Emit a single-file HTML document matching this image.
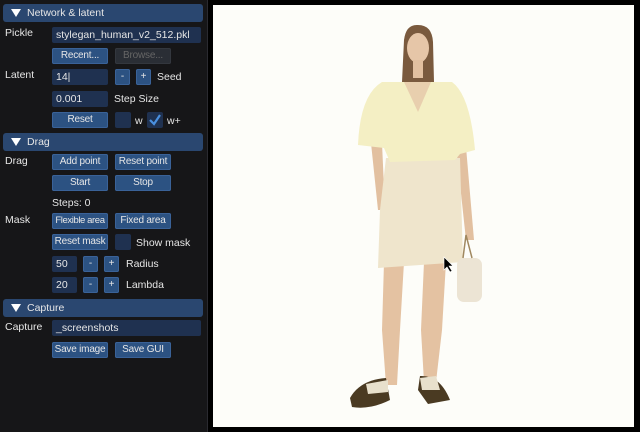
<!DOCTYPE html>
<html><head><meta charset="utf-8"><style>
*{margin:0;padding:0;box-sizing:border-box}
body{width:640px;height:432px;background:#000;position:relative;overflow:hidden;font-family:"Liberation Sans","DejaVu Sans",sans-serif;font-size:10.5px;color:#e6e6e6}
#panel{position:absolute;left:0;top:0;width:208px;height:432px;background:#161618;border-right:1px solid #2a2a30}
.a{position:absolute;white-space:nowrap}
.hd{position:absolute;left:3px;width:200px;height:18px;background:#2a4770;border-radius:3px;padding-left:24px;line-height:18px}
.hd:before{content:"";position:absolute;left:8px;top:5px;border-left:5px solid transparent;border-right:5px solid transparent;border-top:8px solid #fff}
.b{position:absolute;height:16px;background:#2c5282;box-shadow:inset 0 0 0 1px #3a6298;border-radius:2px;text-align:center;line-height:16px;white-space:nowrap;font-size:10px;letter-spacing:-0.2px}
.i{position:absolute;height:16px;background:#1f3150;border-radius:2px;padding-left:4px;line-height:16px}
.d{background:#2a2e35;color:#666;box-shadow:inset 0 0 0 1px #33373e}
.c{position:absolute;width:16px;height:16px;background:#1f3150;border-radius:2px}
#img{position:absolute;left:213px;top:5px;width:421px;height:422px;background:#fdfdf9}
</style></head><body>
<div id="panel">
<div class="hd" style="top:4px">Network &amp; latent</div>
<div class="a" style="left:5px;top:27px">Pickle</div>
<div class="i" style="left:52px;top:27px;width:149px">stylegan_human_v2_512.pkl</div>
<div class="b" style="left:52px;top:48px;width:56px">Recent...</div>
<div class="b d" style="left:115px;top:48px;width:56px">Browse...</div>
<div class="a" style="left:5px;top:69px">Latent</div>
<div class="i" style="left:52px;top:69px;width:56px">14|</div>
<div class="b" style="left:115px;top:69px;width:15px">-</div>
<div class="b" style="left:136px;top:69px;width:15px">+</div>
<div class="a" style="left:157px;top:71px">Seed</div>
<div class="i" style="left:52px;top:91px;width:56px">0.001</div>
<div class="a" style="left:114px;top:93px">Step Size</div>
<div class="b" style="left:52px;top:112px;width:56px">Reset</div>
<div class="c" style="left:115px;top:112px"></div>
<div class="a" style="left:135px;top:115px">w</div>
<div class="c" style="left:147px;top:112px"><svg width="16" height="16"><path d="M3 8 L7 12 L13 3" stroke="#4a90e0" stroke-width="2.2" fill="none"/></svg></div>
<div class="a" style="left:167px;top:115px">w+</div>
<div class="hd" style="top:133px">Drag</div>
<div class="a" style="left:5px;top:155px">Drag</div>
<div class="b" style="left:52px;top:154px;width:56px">Add point</div>
<div class="b" style="left:115px;top:154px;width:56px">Reset point</div>
<div class="b" style="left:52px;top:175px;width:56px">Start</div>
<div class="b" style="left:115px;top:175px;width:56px">Stop</div>
<div class="a" style="left:52px;top:197px">Steps: 0</div>
<div class="a" style="left:5px;top:214px">Mask</div>
<div class="b" style="left:52px;top:213px;width:56px;font-size:9.5px;letter-spacing:-0.4px">Flexible area</div>
<div class="b" style="left:115px;top:213px;width:56px">Fixed area</div>
<div class="b" style="left:52px;top:234px;width:56px">Reset mask</div>
<div class="c" style="left:115px;top:234px"></div>
<div class="a" style="left:136px;top:237px">Show mask</div>
<div class="i" style="left:52px;top:256px;width:25px">50</div>
<div class="b" style="left:83px;top:256px;width:15px">-</div>
<div class="b" style="left:104px;top:256px;width:15px">+</div>
<div class="a" style="left:126px;top:258px">Radius</div>
<div class="i" style="left:52px;top:277px;width:25px">20</div>
<div class="b" style="left:83px;top:277px;width:15px">-</div>
<div class="b" style="left:104px;top:277px;width:15px">+</div>
<div class="a" style="left:126px;top:279px">Lambda</div>
<div class="hd" style="top:299px">Capture</div>
<div class="a" style="left:5px;top:321px">Capture</div>
<div class="i" style="left:52px;top:320px;width:149px">_screenshots</div>
<div class="b" style="left:52px;top:342px;width:56px">Save image</div>
<div class="b" style="left:115px;top:342px;width:56px">Save GUI</div>
</div>
<div id="img"></div>
<svg style="position:absolute;left:0;top:0" width="640" height="432">
<path d="M404 40 Q406 24 418 25 Q432 25 433 42 L434 82 L402 82 Z" fill="#7a5a3e"/>
<ellipse cx="418" cy="48" rx="11" ry="15" fill="#e6c6a8"/>
<rect x="413" y="60" width="10" height="18" fill="#e2c0a0"/>
<path d="M384 262 L404 262 L400 330 L397 385 L386 385 L382 330 Z" fill="#e4c2a2"/>
<path d="M424 262 L446 262 L442 330 L436 382 L424 382 L421 330 Z" fill="#e4c2a2"/>
<path d="M371 143 L382 143 L385 210 L378 210 Z" fill="#e2c0a0"/>
<path d="M456 147 L466 147 L474 240 L466 240 Z" fill="#e2c0a0"/>
<path d="M386 158 L460 158 L463 262 L378 268 L380 210 Z" fill="#efe5cc"/>
<path d="M382 82 L452 82 Q470 95 475 150 L460 154 L455 160 L390 162 L384 148 L358 145 Q360 95 382 82 Z" fill="#f4efc4"/>
<path d="M404 82 L418 112 L431 82 Z" fill="#e8cfae"/>
<rect x="457" y="258" width="25" height="44" rx="7" fill="#ece4d4"/>
<path d="M463 258 L466 235 L472 258" stroke="#a08860" fill="none" stroke-width="1.5"/>
<path d="M350 398 Q360 380 386 378 L390 400 Q370 410 352 407 Z" fill="#4a3a22"/>
<path d="M366 384 L388 380 L388 392 L368 394 Z" fill="#e8e0cc"/>
<path d="M420 376 Q440 375 450 400 L428 404 L418 390 Z" fill="#4a3a22"/>
<path d="M420 378 L436 376 L440 390 L422 390 Z" fill="#e8e0cc"/>
<path d="M444 257 L444 270 L447 267 L450 272 L452 271 L449 266 L453 266 Z" fill="#000" stroke="#fff" stroke-width=".6"/>
</svg>
</body></html>
